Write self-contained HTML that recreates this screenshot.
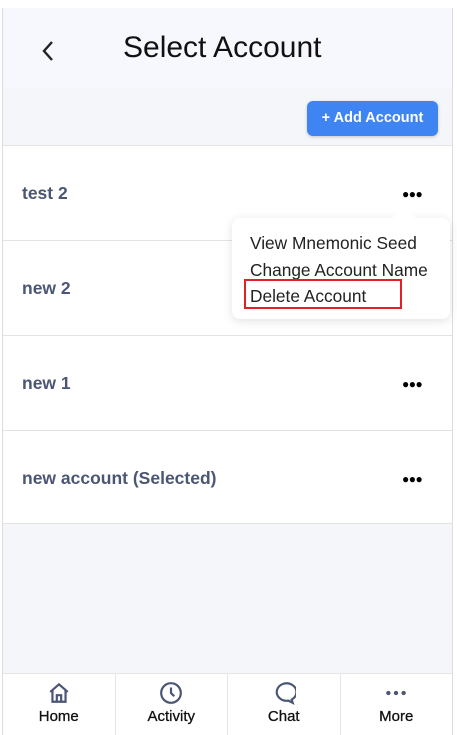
<!DOCTYPE html>
<html><head><style>
*{margin:0;padding:0;box-sizing:border-box}
body{width:457px;height:735px;overflow:hidden;background:#fff;font-family:"Liberation Sans",sans-serif;position:relative}
.chrome{position:absolute;left:0;top:0;width:457px;height:9px;background:#fff}
.page{position:absolute;left:2px;top:8px;width:451px;height:727px;background:#f5f6fa;border-left:1px solid #ddd;border-right:1px solid #ddd}
.hdr{position:absolute;left:0;top:0;width:100%;height:80px;background:#f7f8fd}
.title{position:absolute;left:120px;top:23px;font-size:30px;color:#111}
.back{position:absolute;left:38px;top:32px}
.btn{position:absolute;left:304px;top:93px;width:131px;height:35px;background:#3e84f3;border-radius:6px;color:#fff;font-weight:bold;font-size:14.5px;text-align:center;line-height:35px;box-shadow:0 1px 3px rgba(0,0,0,.2)}
.row{position:absolute;left:0;width:100%;height:95px;background:#fff;border-top:1px solid #e3e3e6;font-weight:bold;font-size:17.5px;color:#4b5675}
.row span{position:absolute;left:19px;top:37px}
.dots{position:absolute;left:399px;top:41px;font-size:12px;color:#000;letter-spacing:-0.5px}
.menu{position:absolute;left:229px;top:210px;width:218px;height:101px;background:#fff;border-radius:8px;box-shadow:0 2px 10px rgba(0,0,0,.12);font-size:17.3px;color:#222;padding:12px 0 0 18px;line-height:26.5px}
.menu:before{content:"";position:absolute;left:160px;top:-12px;border:12px solid transparent;border-top:0;border-bottom-color:#fff}
.red{position:absolute;left:12px;top:61px;width:158px;height:30px;border:2px solid #e3202a}
.nav{position:absolute;left:0;top:665px;width:100%;height:62px;background:#fff;border-top:1px solid #e5e5e8;display:flex}
.nav div{flex:1;border-right:1px solid #e5e5e8;text-align:center;font-size:15px;color:#111;padding-top:7px;-webkit-text-stroke:0.3px #111}
.nav div:last-child{border-right:0}
.nav svg{display:block;margin:0 auto 3px}
</style></head><body>
<div class="chrome"></div>
<div class="page">
<div class="hdr">
<svg class="back" width="14" height="22" viewBox="0 0 14 22"><path d="M11 2L3 11l8 9" fill="none" stroke="#222" stroke-width="2.4"/></svg>
<div class="title">Select Account</div>
</div>
<div class="btn">+ Add Account</div>
<div class="row" style="top:137px"><span>test 2</span><div class="dots">●●●</div></div>
<div class="row" style="top:232px"><span>new 2</span></div>
<div class="row" style="top:327px"><span>new 1</span><div class="dots">●●●</div></div>
<div class="row" style="top:422px;height:94px;border-bottom:1px solid #e3e3e6"><span>new account (Selected)</span><div class="dots">●●●</div></div>
<div class="menu">View Mnemonic Seed<br>Change Account Name<br>Delete Account<div class="red"></div></div>
<div class="nav">
<div><svg width="24" height="24" viewBox="0 0 22 22"><path d="M3 10L11 3l8 7M5 8v11h12V8M9 19v-6h4v6" fill="none" stroke="#4b5675" stroke-width="2"/></svg>Home</div>
<div><svg width="24" height="24" viewBox="0 0 22 22"><circle cx="11" cy="11" r="9" fill="none" stroke="#4b5675" stroke-width="2"/><path d="M11 6v5l3 3" fill="none" stroke="#4b5675" stroke-width="2"/></svg>Activity</div>
<div><svg width="24" height="24" viewBox="0 0 22 22"><path d="M18 17l1 3-4-2a9 8 0 1 1 3-1z" fill="none" stroke="#4b5675" stroke-width="2"/></svg>Chat</div>
<div><svg width="24" height="24" viewBox="0 0 22 22"><circle cx="4" cy="11" r="2" fill="#4b5675"/><circle cx="11" cy="11" r="2" fill="#4b5675"/><circle cx="18" cy="11" r="2" fill="#4b5675"/></svg>More</div>
</div>
</div>
</body></html>
